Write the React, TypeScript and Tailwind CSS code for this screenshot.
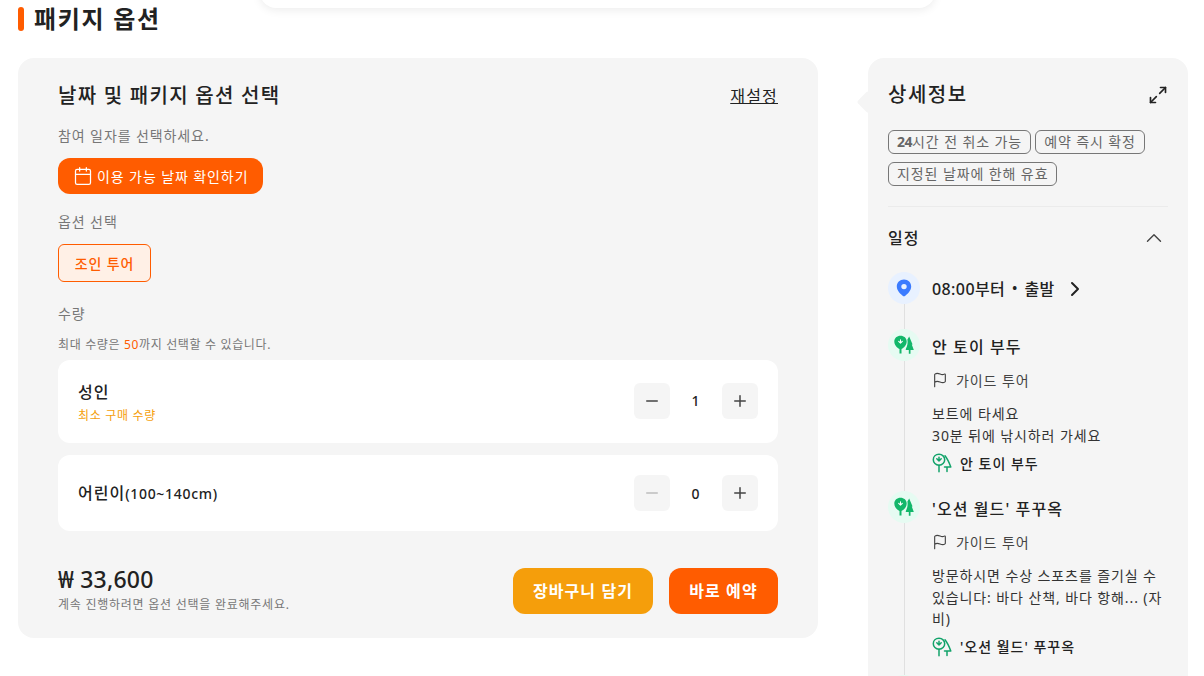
import React from "react";
import { Calendar, Flag, Minus, Plus, ChevronRight, ChevronUp, Maximize2 } from "lucide-react";

const font = { fontFamily: '"Noto Sans", "Noto Sans CJK KR", sans-serif' };

function PinIcon() {
  return (
    <svg width="16" height="18" viewBox="0 0 16 18">
      <path fill="#3b7bff" fillRule="evenodd" d="M8 0.5C3.8 0.5 0.8 3.6 0.8 7.4c0 4 3.6 7.8 7.2 10.1 3.600-2.300 7.200-6.100 7.200-10.100C15.200 3.600 12.200 0.500 8 0.500zm0 4.400a2.700 2.700 0 1 1 0 5.400 2.700 2.700 0 0 1 0-5.400z" />
    </svg>
  );
}

function TreesSolid() {
  return (
    <svg width="20" height="20" viewBox="0 0 20 20">
      <path fill="#12b76a" d="M6.500.8C3 .8.300 3.200.300 6.500c0 3.600 2.600 6.200 5.200 7.500v4.500h2V14c2.600-1.300 5.200-3.900 5.200-7.500C12.700 3.200 10 .8 6.500.8z" />
      <path fill="#12b76a" d="M15.200 1.500l-1.800 3c.6 3.200 0 6.500-1.400 9l-.3 1.500h3.100v3.800h1.700V15h3.300l-2-5.500h.8z" />
      <path fill="none" stroke="#fff" strokeWidth="1.100" strokeLinecap="round" strokeLinejoin="round" d="M4.700 6.300l1.800 1.800 1.800-1.800M6.500 8.100V4.800" />
    </svg>
  );
}

function TreesOutline() {
  return (
    <svg width="20" height="20" viewBox="0 0 20 20" fill="none" stroke="#12a36a" strokeWidth="1.500" strokeLinecap="round" strokeLinejoin="round">
      <path d="M7 1.300C3.700 1.300 1.300 3.600 1.300 6.700c0 3 2.400 5.500 5.700 5.500s5.700-2.500 5.700-5.500c0-3.100-2.400-5.400-5.700-5.400z" />
      <path d="M7 12.200v6.500M4.800 5.800l2.200 2.200 2.200-2.200M7 8V4.300" />
      <path d="M13 2.800c1.800 2.200 4.300 7.200 5.800 11.200h-6.300M15 14v4.500" />
    </svg>
  );
}

function Counter({ value, muted, className }: { value: number; muted?: boolean; className?: string }) {
  return (
    <div className={`flex items-center ${className ?? ""}`}>
      <button className="w-9 h-9 rounded-md bg-[#f5f5f5] flex items-center justify-center">
        <Minus size={18} color={muted ? "#bdbdbd" : "#444"} strokeWidth={2} />
      </button>
      <span className="w-[52px] pr-[1px] text-center text-[14px] font-medium text-[#222] tracking-normal">{value}</span>
      <button className="w-9 h-9 rounded-md bg-[#f5f5f5] flex items-center justify-center">
        <Plus size={18} color="#444" strokeWidth={2} />
      </button>
    </div>
  );
}

function Tag({ children }: { children: React.ReactNode }) {
  return (
    <span className="h-6 px-2 rounded-md border border-[#777] text-[14px] leading-[22px] text-[#666] whitespace-nowrap">
      {children}
    </span>
  );
}

function Dot({ bg, children }: { bg: string; children?: React.ReactNode }) {
  return (
    <div className={`w-8 h-8 rounded-full flex items-center justify-center shrink-0 ${bg}`}>{children}</div>
  );
}

function Stop({ title, lines }: { title: string; lines: string[] }) {
  return (
    <div className="flex gap-3">
      <div className="w-8 flex flex-col items-center shrink-0">
        <Dot bg="bg-[#e6fbf2]"><TreesSolid /></Dot>
        <div className="w-px flex-1 bg-[#e0e0e0]" />
      </div>
      <div className="flex-1 min-w-0">
        <div className="h-8 pt-[3px] flex items-center text-[16px] font-medium text-[#222] tracking-[1.100px]">{title}</div>
        <div className="mt-[7px] h-6 flex items-center gap-2 text-[14px] text-[#444]">
          <Flag size={16} color="#444" strokeWidth={1.700} />
          <span>가이드 투어</span>
        </div>
        <div className="mt-[11px] text-[14px] text-[#333] leading-[21.500px]">
          {lines.map((l) => (
            <div key={l}>{l}</div>
          ))}
        </div>
        <div className="mt-[5px] h-6 flex items-center gap-2 text-[14px] font-medium text-[#222] tracking-[1px]">
          <TreesOutline />
          <span>{title}</span>
        </div>
      </div>
    </div>
  );
}

export default function App() {
  return (
    <div style={font} className="relative w-[1204px] h-[676px] overflow-hidden bg-white tracking-[0.9px]">
      <div className="absolute left-[260px] top-[-40px] w-[675px] h-[48px] bg-white rounded-2xl shadow-[0_2px_10px_rgba(0,0,0,0.08)]" />
      <div className="flex items-start pl-[18px]">
        <div className="w-[800px] shrink-0">
          <div className="h-[58px] pt-1">
            <div className="flex items-center gap-[10px] h-[30px]">
              <span className="w-[6px] h-6 rounded-full bg-[#ff5c00]" />
              <h2 className="text-[24px] font-bold text-[#222] leading-[30px] tracking-[1.700px]">패키지 옵션</h2>
            </div>
          </div>
          <div className="h-[580px] rounded-2xl bg-[#f5f5f5] px-10 pt-[23px]">
            <div className="flex justify-between items-center h-[30px]">
              <h3 className="text-[20px] font-medium text-[#222] tracking-[1.250px]">날짜 및 패키지 옵션 선택</h3>
              <a className="text-[16px] text-[#222] underline tracking-[1.200px]">재설정</a>
            </div>
            <p className="mt-[15px] text-[14px] leading-[20px] text-[#777]">참여 일자를 선택하세요.</p>
            <button className="mt-3 h-9 w-[205px] rounded-xl bg-[#ff5c00] text-white text-[14px] flex items-center pl-[15px] gap-1">
              <Calendar size={20} strokeWidth={1.500} />
              <span>이용 가능 날짜 확인하기</span>
            </button>
            <p className="mt-[18px] text-[14px] leading-[20px] text-[#777]">옵션 선택</p>
            <button className="mt-3 h-[38px] w-[93px] rounded-md border border-[#ff5c00] bg-[#fff0e6] text-[#ff5c00] text-[14px] font-medium">조인 투어</button>
            <p className="mt-[22px] text-[14px] leading-[20px] text-[#777]">수량</p>
            <p className="mt-[13px] text-[12px] leading-[16px] text-[#777] tracking-[0.650px]">
              최대 수량은 <span className="text-[#ff5c00]">50</span>까지 선택할 수 있습니다.
            </p>
            <div className="mt-[7px] h-[83px] rounded-xl bg-white flex items-center justify-between px-5">
              <div className="pt-[2px]">
                <div className="text-[16px] leading-[22px] font-medium text-[#222] tracking-[1px]">성인</div>
                <div className="mt-[5px] text-[12px] leading-[16px] text-[#f59e0b] tracking-[0.700px]">최소 구매 수량</div>
              </div>
              <Counter value={1} className="mb-[2px]" />
            </div>
            <div className="mt-3 h-[76px] rounded-xl bg-white flex items-center justify-between px-5">
              <div className="text-[16px] font-medium text-[#222] tracking-[1px]">
                어린이<span className="text-[14px] tracking-[0.700px]">(100~140cm)</span>
              </div>
              <Counter value={0} muted />
            </div>
            <div className="mt-[35px] flex items-center justify-between">
              <div className="pb-[3px]">
                <div className="text-[23px] leading-[26px] font-medium text-[#222] tracking-[0.200px]">₩ 33,600</div>
                <div className="mt-[5px] text-[12px] leading-[16px] text-[#777] tracking-[0.750px]">계속 진행하려면 옵션 선택을 완료해주세요.</div>
              </div>
              <div className="flex gap-4">
                <button className="w-[140px] h-[46px] rounded-xl bg-[#f59e0b] text-white text-[16px] font-bold tracking-[1.100px]">장바구니 담기</button>
                <button className="w-[109px] h-[46px] rounded-xl bg-[#ff5c00] text-white text-[16px] font-bold tracking-[1.100px]">바로 예약</button>
              </div>
            </div>
          </div>
        </div>

        <div className="relative ml-[50px] mt-[58px] w-[320px] h-[640px] shrink-0 rounded-2xl bg-[#f5f5f5] px-5 pt-[22px]">
          <div className="absolute left-[-8px] top-[36px] w-4 h-4 rotate-45 bg-[#f5f5f5] rounded-[2px]" />
          <div className="flex items-center justify-between h-[30px]">
            <h3 className="text-[20px] font-medium text-[#222] tracking-[1.500px]">상세정보</h3>
            <Maximize2 size={20} color="#222" strokeWidth={2} className="mb-px" />
          </div>
          <div className="mt-5 flex flex-wrap gap-x-1 gap-y-2">
            <Tag><b className="font-bold tracking-[-0.5px]">24</b>시간 전 취소 가능</Tag>
            <Tag>예약 즉시 확정</Tag>
            <Tag>지정된 날짜에 한해 유효</Tag>
          </div>
          <div className="mt-5 border-t border-[#ebebeb]" />
          <div className="mt-[19px] flex items-center justify-between h-6">
            <span className="text-[16px] font-medium text-[#222] tracking-[1px]">일정</span>
            <ChevronUp size={26} color="#444" strokeWidth={1.300} className="mr-px" />
          </div>
          <div className="mt-[22px]">
            <div className="flex gap-3">
              <div className="w-8 flex flex-col items-center shrink-0">
                <Dot bg="bg-[#e8f1ff]"><PinIcon /></Dot>
                <div className="w-px h-[25px] bg-[#e0e0e0]" />
              </div>
              <div className="h-8 pt-[2px] flex items-center text-[16px] font-medium text-[#222] tracking-[0.400px]">
                08:00부터 <span className="mx-[7px] font-bold text-[13px]">•</span> 출발
                <ChevronRight size={24} color="#222" strokeWidth={2} className="ml-2" />
              </div>
            </div>
            <Stop title="안 토이 부두" lines={["보트에 타세요", "30분 뒤에 낚시하러 가세요"]} />
            <div className="flex w-8 justify-center h-[16px]"><div className="w-px bg-[#e0e0e0]" /></div>
            <Stop title="'오션 월드' 푸꾸옥" lines={["방문하시면 수상 스포츠를 즐기실 수", "있습니다: 바다 산책, 바다 항해... (자", "비)"]} />
            <div className="flex w-8 justify-center h-[16px]"><div className="w-px bg-[#e0e0e0]" /></div>
            <Dot bg="bg-[#e6fbf2]" />
          </div>
        </div>
      </div>
    </div>
  );
}
